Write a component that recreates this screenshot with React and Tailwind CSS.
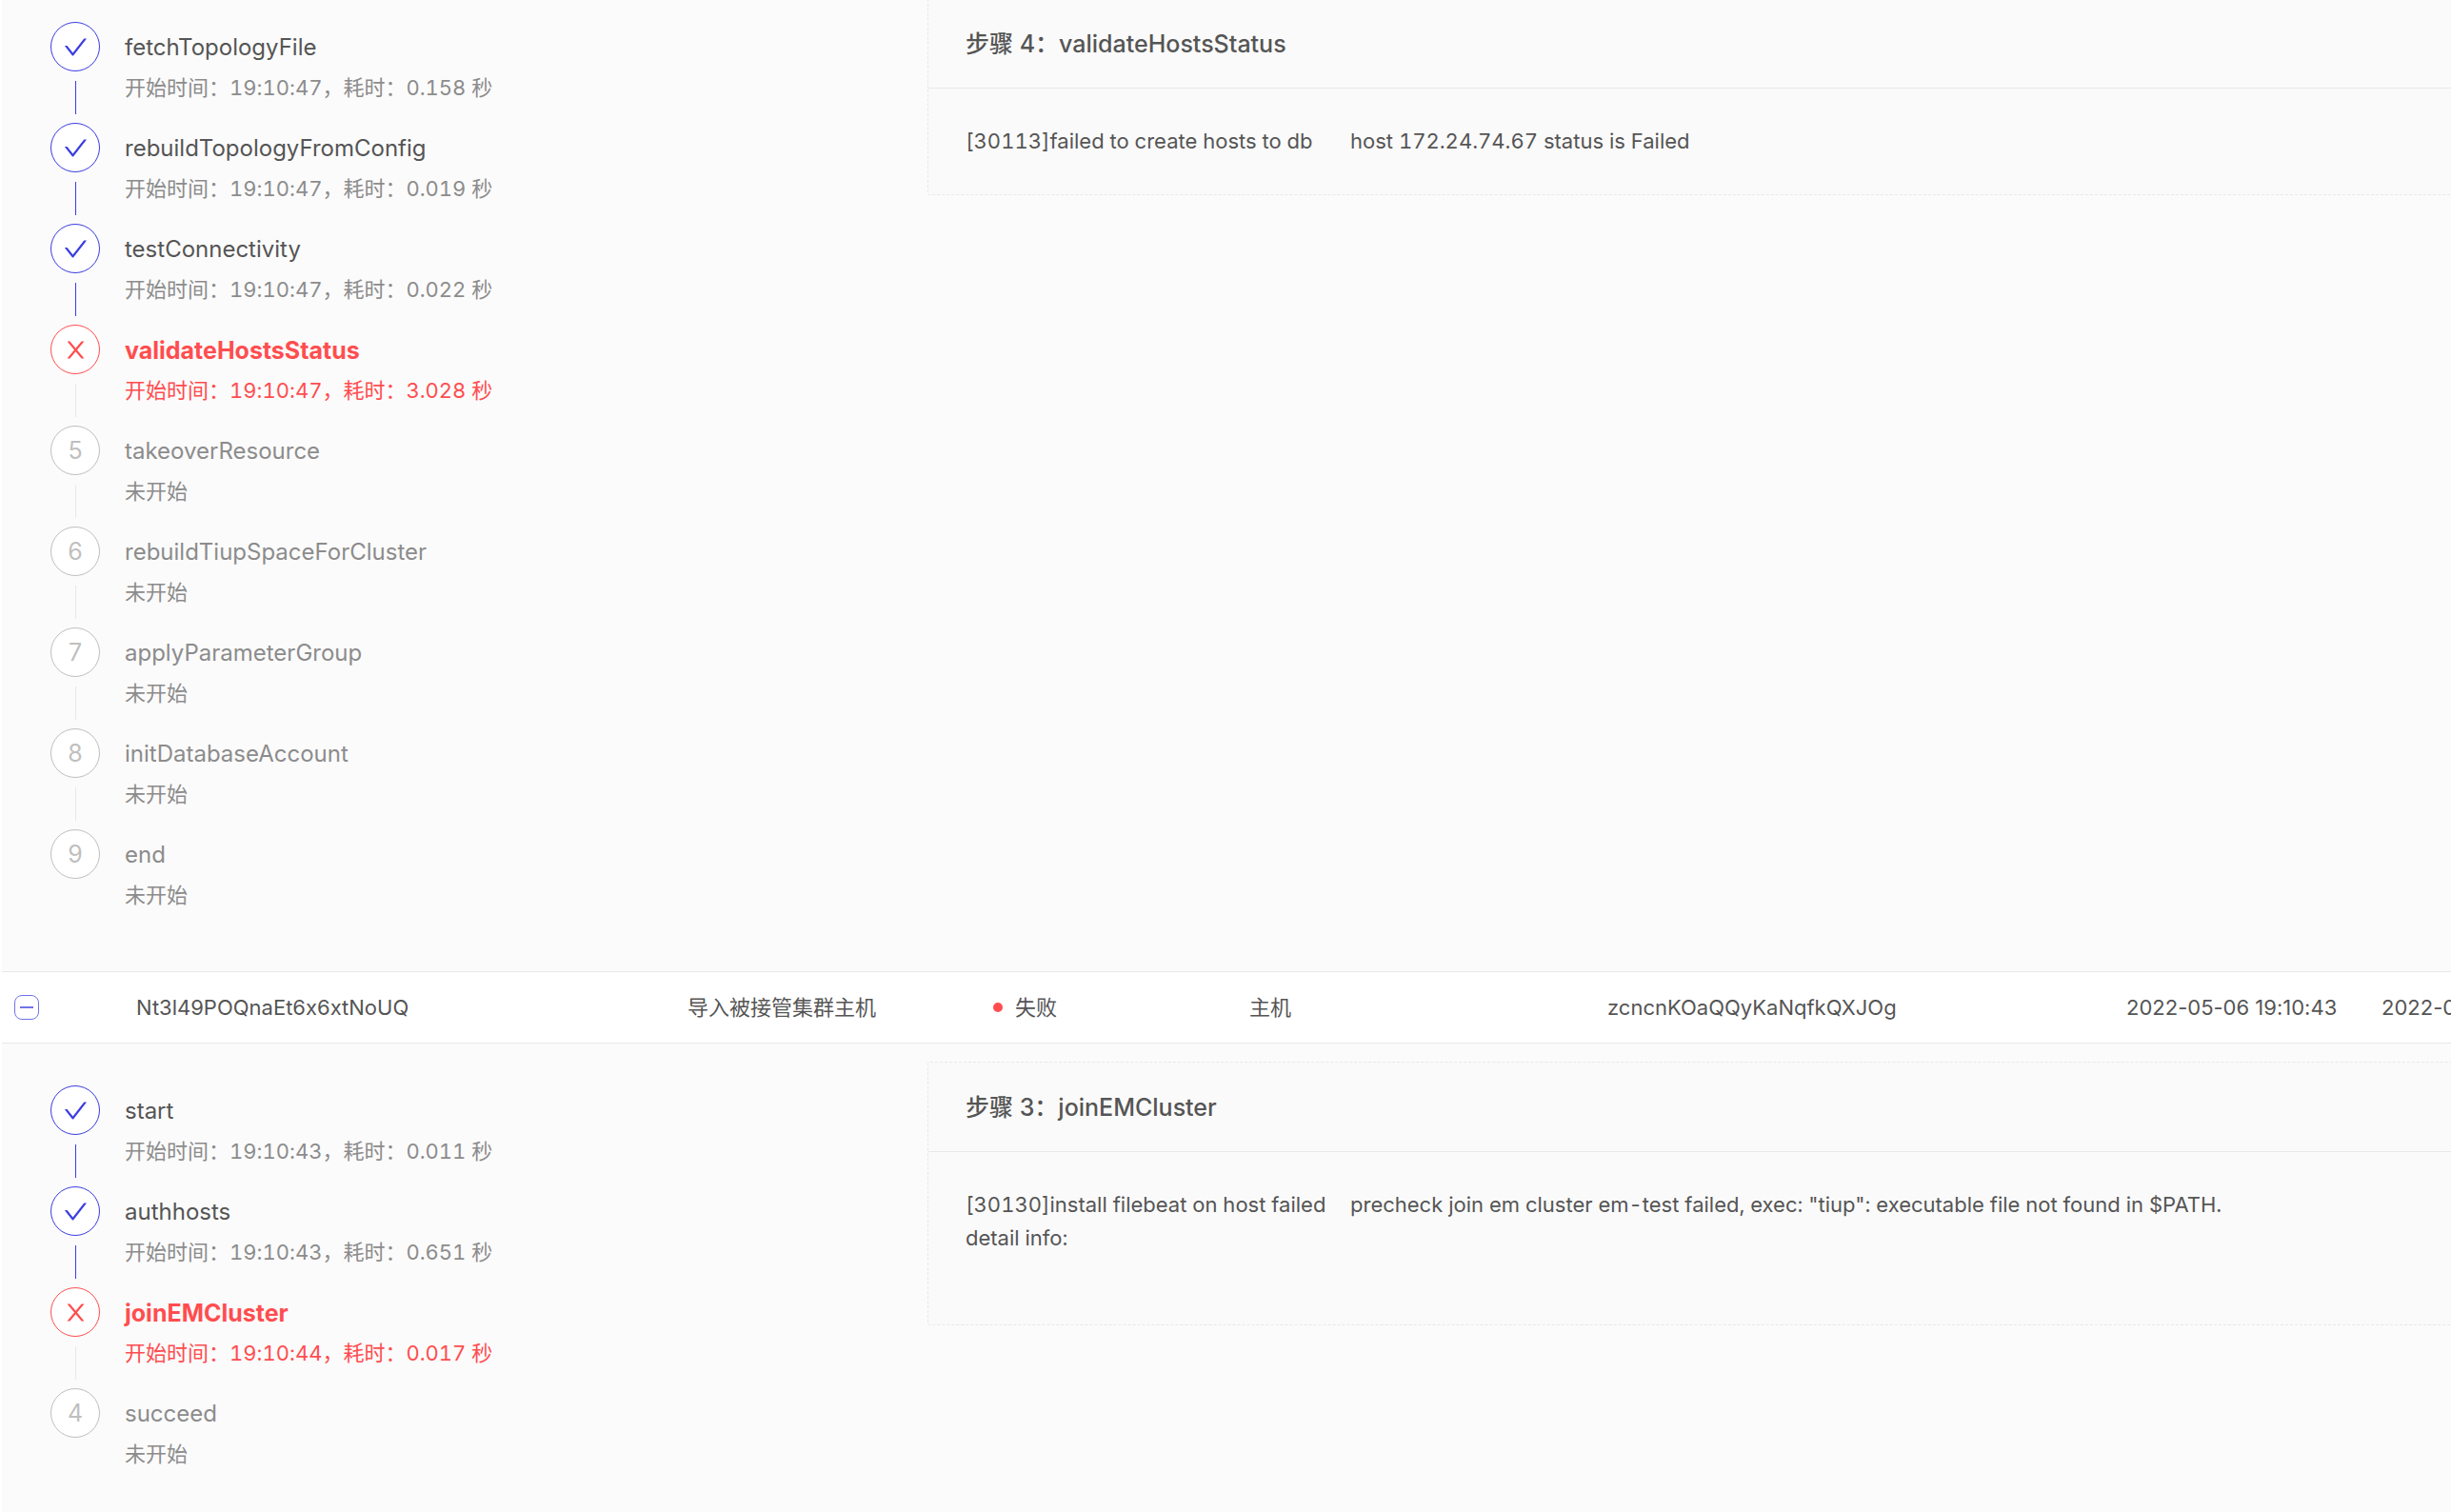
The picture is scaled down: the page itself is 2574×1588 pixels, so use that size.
const statusStyles = {
  done: {
    circle: "border-[#3a3de0] text-[#3a3de0]",
    title: "text-[24px] text-[#555555]",
    desc: "text-[#8c8c8c]",
    line: "bg-[#3a3de0]",
  },
  error: {
    circle: "border-[#ff4d4f] text-[#ff4d4f]",
    title: "text-[25px] font-bold text-[#ff4d4f]",
    desc: "text-[#ff4d4f]",
    line: "bg-[#e8e8e8]",
  },
  wait: {
    circle: "border-[#bfbfbf] text-[#bfbfbf]",
    title: "text-[24px] text-[#8c8c8c]",
    desc: "text-[#8c8c8c]",
    line: "bg-[#e8e8e8]",
  },
};

const importSteps = [
  { no: 1, name: "fetchTopologyFile", status: "done", desc: "开始时间：19:10:47，耗时：0.158 秒" },
  { no: 2, name: "rebuildTopologyFromConfig", status: "done", desc: "开始时间：19:10:47，耗时：0.019 秒" },
  { no: 3, name: "testConnectivity", status: "done", desc: "开始时间：19:10:47，耗时：0.022 秒" },
  { no: 4, name: "validateHostsStatus", status: "error", desc: "开始时间：19:10:47，耗时：3.028 秒" },
  { no: 5, name: "takeoverResource", status: "wait", desc: "未开始" },
  { no: 6, name: "rebuildTiupSpaceForCluster", status: "wait", desc: "未开始" },
  { no: 7, name: "applyParameterGroup", status: "wait", desc: "未开始" },
  { no: 8, name: "initDatabaseAccount", status: "wait", desc: "未开始" },
  { no: 9, name: "end", status: "wait", desc: "未开始" },
];

const hostSteps = [
  { no: 1, name: "start", status: "done", desc: "开始时间：19:10:43，耗时：0.011 秒" },
  { no: 2, name: "authhosts", status: "done", desc: "开始时间：19:10:43，耗时：0.651 秒" },
  { no: 3, name: "joinEMCluster", status: "error", desc: "开始时间：19:10:44，耗时：0.017 秒" },
  { no: 4, name: "succeed", status: "wait", desc: "未开始" },
];

const CheckIcon = () => (
  <svg viewBox="64 64 896 896" className="size-[25px]" fill="currentColor" aria-hidden="true">
    <path d="M912 190h-69.9c-9.8 0-19.1 4.5-25.1 12.2L404.7 724.5 207 474a32 32 0 0 0-25.1-12.2H112c-6.7 0-10.4 7.7-6.3 12.9l273.9 347c12.8 16.2 37.4 16.2 50.3 0l488.4-618.9c4.1-5.1.4-12.8-6.3-12.8z" />
  </svg>
);

const CloseIcon = () => (
  <svg viewBox="64 64 896 896" className="size-[25px]" fill="currentColor" aria-hidden="true">
    <path d="M563.8 512l262.5-312.9c4.4-5.2.7-13.1-6.1-13.1h-79.8c-4.7 0-9.2 2.1-12.3 5.7L511.6 449.8 295.1 191.7c-3-3.6-7.5-5.7-12.3-5.7H203c-6.8 0-10.5 7.9-6.1 13.1L459.4 512 196.9 824.9A7.95 7.95 0 0 0 203 838h79.8c4.7 0 9.2-2.1 12.3-5.7l216.5-258.1 216.5 258.1c3 3.6 7.5 5.7 12.3 5.7h79.8c6.8 0 10.5-7.9 6.1-13.1L563.8 512z" />
  </svg>
);

const StepIcon = ({ status, no }) => {
  if (status === "done") return <CheckIcon />;
  if (status === "error") return <CloseIcon />;
  return <span>{no}</span>;
};

const StepList = ({ steps }) => (
  <ol className="w-[972px] shrink-0 pt-[25px] pl-[51px]">
    {steps.map((step, index) => {
      const style = statusStyles[step.status];
      return (
        <li key={step.no} className="flex h-[106px] gap-[26px]">
          <div className="flex flex-col items-center gap-[10px]">
            <div
              className={`flex size-[52px] items-center justify-center rounded-full border bg-white text-[25px] leading-none ${style.circle}`}
            >
              <StepIcon status={step.status} no={step.no} />
            </div>
            {index < steps.length - 1 && <div className={`h-[35px] w-px ${style.line}`}></div>}
          </div>
          <div className="pt-[6px]">
            <h4 className={`leading-[42px] ${style.title}`}>{step.name}</h4>
            <p className={`text-[22px] leading-[43px] tabular-nums ${style.desc}`}>{step.desc}</p>
          </div>
        </li>
      );
    })}
  </ol>
);

const ResultCard = ({ title, children }) => (
  <section className="min-w-0 flex-1 self-start rounded-[3px] border border-dashed border-[#e8e8e8] bg-[#fafafa]">
    <h3 className="border-b border-[#e8e8e8] px-[39px] pt-[27px] pb-[25px] text-[25px] leading-[41px] font-medium">
      {title}
    </h3>
    {/* error code and message are separated by a tab */}
    <pre className="px-[39px] py-[38px] font-[inherit] text-[22px] leading-[35px] tabular-nums [tab-size:101px]">
      {children}
    </pre>
  </section>
);

export default function App() {
  return (
    <main className="min-h-screen overflow-hidden bg-white pl-[2px] font-[Inter,'Noto_Sans_CJK_SC',sans-serif] text-[22px] text-[#555555] [font-variant-ligatures:no-contextual]">
      <table className="w-[2754px] table-fixed border-collapse text-left">
        <colgroup>
          <col className="w-[128px]" />
          <col className="w-[579px]" />
          <col className="w-[321px]" />
          <col className="w-[269px]" />
          <col className="w-[376px]" />
          <col className="w-[545px]" />
          <col className="w-[268px]" />
          <col className="w-[268px]" />
        </colgroup>
        <tbody>
          <tr className="bg-[#fbfbfb]">
            <td colSpan={8} className="p-0">
              <div className="-mt-[2px] flex pb-[43px]">
                <StepList steps={importSteps} />
                <ResultCard title="步骤 4：validateHostsStatus">
                  {"[30113]failed to create hosts to db\thost 172.24.74.67 status is Failed"}
                </ResultCard>
              </div>
            </td>
          </tr>

          <tr className="h-[75px] border-y border-[#e8e8ec] bg-white whitespace-nowrap">
            <td className="px-[13px]">
              <button
                type="button"
                aria-label="收起"
                className="flex size-[26px] items-center justify-center rounded-[8px] border border-[#7073ea] bg-white"
              >
                <span className="h-[2px] w-[14px] bg-[#7073ea]"></span>
              </button>
            </td>
            <td className="px-[13px]">Nt3l49POQnaEt6x6xtNoUQ</td>
            <td className="px-[13px]">导入被接管集群主机</td>
            <td className="px-[13px]">
              <span className="flex items-center gap-[13px]">
                <span className="size-[10px] rounded-full bg-[#ff4d4f]"></span>
                失败
              </span>
            </td>
            <td className="px-[13px]">主机</td>
            <td className="px-[13px]">zcncnKOaQQyKaNqfkQXJOg</td>
            <td className="px-[13px]">2022-05-06 19:10:43</td>
            <td className="px-[13px]">2022-05-06 19:10:44</td>
          </tr>

          <tr className="bg-[#fbfbfb]">
            <td colSpan={8} className="p-0">
              <div className="flex pt-[19px] pb-[43px]">
                <StepList steps={hostSteps} />
                <ResultCard title="步骤 3：joinEMCluster">
                  {"[30130]install filebeat on host failed\tprecheck join em cluster em-test failed, exec: \"tiup\": executable file not found in $PATH.\ndetail info:\n "}
                </ResultCard>
              </div>
            </td>
          </tr>
        </tbody>
      </table>
    </main>
  );
}
